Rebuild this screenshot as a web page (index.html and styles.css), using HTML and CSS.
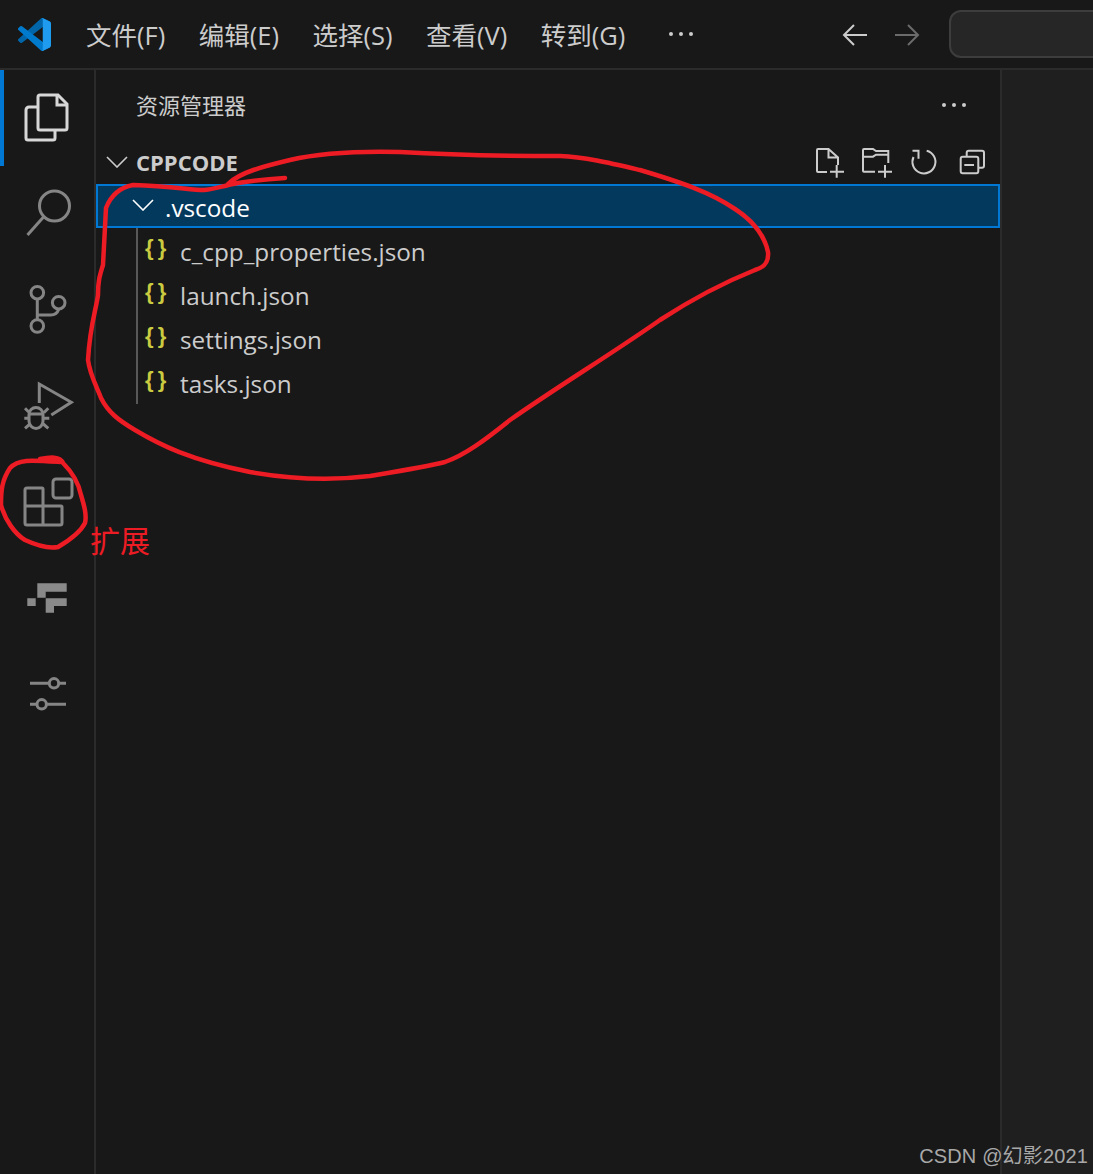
FILE: index.html
```html
<!DOCTYPE html>
<html lang="zh">
<head>
<meta charset="utf-8">
<title>CPPCODE</title>
<link rel="stylesheet" href="styles.css">
</head>
<body>
<div class="app">
  <header class="titlebar">
    <svg class="logo" viewBox="0 0 100 100" width="33" height="33">
      <path fill="#0065A9" d="M96.46 10.8 75.86.87a6.23 6.23 0 0 0-7.1 1.2L1.3 63.6a4.16 4.16 0 0 0 0 6.16l5.5 5a4.16 4.16 0 0 0 5.32.24L93.3 13.4a4.13 4.13 0 0 1 6.7 3.3v-.24a6.25 6.25 0 0 0-3.54-5.65z"/>
      <path fill="#007ACC" d="M96.46 89.2 75.86 99.13a6.23 6.23 0 0 1-7.1-1.2L1.3 36.4a4.16 4.16 0 0 1 0-6.16l5.5-5a4.16 4.16 0 0 1 5.32-.24L93.3 86.6a4.13 4.13 0 0 0 6.7-3.3v.24a6.25 6.25 0 0 1-3.54 5.65z"/>
      <path fill="#1F9CF0" d="M75.86 99.13a6.23 6.23 0 0 1-7.1-1.2c2.3 2.3 6.24.67 6.24-2.6V4.67c0-3.27-3.94-4.9-6.24-2.6a6.23 6.23 0 0 1 7.1-1.2l20.6 9.9A6.25 6.25 0 0 1 100 16.4v67.2a6.25 6.25 0 0 1-3.54 5.63z"/>
    </svg>
    <nav class="menu">
      <span>文件(F)</span><span>编辑(E)</span><span>选择(S)</span><span>查看(V)</span><span>转到(G)</span>
      <svg class="dots" width="26" height="8" viewBox="0 0 26 8"><circle cx="3" cy="4" r="2"/><circle cx="13" cy="4" r="2"/><circle cx="23" cy="4" r="2"/></svg>
    </nav>
    <div class="nav-arrows">
      <svg class="arrow" width="26" height="24" viewBox="0 0 26 24"><path d="M25 12H2M12 2 2 12l10 10"/></svg>
      <svg class="arrow arrow-off" width="26" height="24" viewBox="0 0 26 24"><path d="M1 12h23M14 2l10 10-10 10"/></svg>
    </div>
    <div class="command"></div>
  </header>
  <div class="main">
    <aside class="activity">
      <div class="act act-on">
        <svg class="ico ico-on" width="48" height="48" viewBox="0 0 48 48">
          <path d="M15 13H6a3 3 0 0 0-3 3v28a2 2 0 0 0 2 2h25a2 2 0 0 0 2-2v-8"/>
          <path d="M15 3a2 2 0 0 1 2-2h18l9 9v24a2 2 0 0 1-2 2H17a2 2 0 0 1-2-2z"/>
          <path d="M34 1v10h10"/>
        </svg>
      </div>
      <div class="act">
        <svg class="ico" width="48" height="48" viewBox="0 0 48 48"><circle cx="31.5" cy="16" r="15"/><path d="M20.5 27 4.5 45"/></svg>
      </div>
      <div class="act">
        <svg class="ico" width="48" height="48" viewBox="0 0 48 48"><circle cx="14.3" cy="6.7" r="6.3"/><circle cx="35.7" cy="16.7" r="6.3"/><circle cx="14.3" cy="40" r="6.3"/><path d="M14.3 13v20.5M14.3 29h13.5q6 0 8-6"/></svg>
      </div>
      <div class="act">
        <svg class="ico" width="48" height="48" viewBox="0 0 48 48">
          <path d="M16.300 21V2l32 18.300-20 12.700"/>
          <path d="M6 36v-3.500a7 7 0 0 1 14 0V39a7 7.500 0 0 1-14 0z"/>
          <path d="M6 32h14M2 26.300l4.500 4.500M25.300 26.300l-4.500 4.500M1.300 36.300H6M20 36.300h6.300M2 46.300l5-4.300M25.300 46.300l-5-4.300"/>
        </svg>
      </div>
      <div class="act">
        <svg class="ico" width="50" height="50" viewBox="0 0 50 50"><rect x="30" y="1" width="19" height="19" rx="3"/><path d="M4 10h15a1 1 0 0 1 1 1v36H4a2 2 0 0 1-2-2V12a2 2 0 0 1 2-2zM2 28h36a1 1 0 0 1 1 1v16a2 2 0 0 1-2 2H20"/></svg>
      </div>
      <div class="act">
        <svg class="ico-fill" width="48" height="48" viewBox="0 0 48 48"><path d="M14.300 9.300h29.400v8.400h-21v6h-8.400zM22.700 24.300h21V32H31v6.700h-8.300zM4.300 24.300h8.400V32H4.300z"/></svg>
      </div>
      <div class="act">
        <svg class="ico" width="48" height="48" viewBox="0 0 48 48"><path d="M7 13.300h19M36 13.300h7M7 34.300h7M24 34.300h19"/><circle cx="31" cy="13.300" r="4.700"/><circle cx="18.700" cy="34.300" r="4.700"/></svg>
      </div>
    </aside>
    <section class="sidebar">
      <div class="side-head">
        <span class="side-title">资源管理器</span>
        <svg class="dots" width="26" height="8" viewBox="0 0 26 8"><circle cx="3" cy="4" r="2"/><circle cx="13" cy="4" r="2"/><circle cx="23" cy="4" r="2"/></svg>
      </div>
      <div class="section">
        <svg class="chev chev-section" width="22" height="12" viewBox="0 0 22 12"><path d="M1 1l10 10L21 1"/></svg>
        <span class="section-name">CPPCODE</span>
        <div class="actions">
          <svg class="tool" width="30" height="30" viewBox="0 0 30 30"><path d="M11 26H2a1 1 0 0 1-1-1V4a1 1 0 0 1 1-1h10.500l9.500 8.500V19M12.500 3v8.500H22M14 25.700h14M20.700 19v12.700"/></svg>
          <svg class="tool" width="30" height="30" viewBox="0 0 30 30"><path d="M11 25.700H0a1 1 0 0 1-1-1V4a1 1 0 0 1 1-1h9l3 2h12.300v12M-1 10.700h10l3-2h13.300M14 25.700h14M21 19v12.700"/></svg>
          <svg class="tool" width="30" height="30" viewBox="0 0 30 30"><path d="M14.700 4.700A11.500 11.500 0 1 1 1.500 11M0.500 4.700H6.500v8"/></svg>
          <svg class="tool" width="30" height="30" viewBox="0 0 30 30"><path d="M6.700 10V6.700a2 2 0 0 1 2-2H22a2 2 0 0 1 2 2v13a2 2 0 0 1-2 2h-3.700"/><rect x="0.700" y="10.700" width="17.600" height="16.600" rx="2"/><path d="M4.300 19H14"/></svg>
        </div>
      </div>
      <div class="folder">
        <svg class="chev chev-on" width="22" height="12" viewBox="0 0 22 12"><path d="M1 1l10 10L21 1"/></svg>
        <span>.vscode</span>
      </div>
      <ul class="files">
        <li class="file"><span class="brace">{ }</span><span>c_cpp_properties.json</span></li>
        <li class="file"><span class="brace">{ }</span><span>launch.json</span></li>
        <li class="file"><span class="brace">{ }</span><span>settings.json</span></li>
        <li class="file"><span class="brace">{ }</span><span>tasks.json</span></li>
      </ul>
    </section>
    <div class="editor"></div>
  </div>
  <svg class="ink" width="1093" height="1174" viewBox="0 0 1093 1174">
    <path d="M285 178C268 179 250 181 238 183C222 186 212 190 204 190C190 190 172 186 133 185C122 187 112 193 106 208L103 265C100 275 98 280 98 295C96 310 90 325 88 360C90 375 96 385 101 398C108 412 118 420 135 430C160 445 190 460 250 472C290 479 330 481 370 476C400 471 425 467 445 462C465 455 485 440 510 420C560 385 610 355 660 320C700 294 730 280 755 270C765 267 769 262 768 252C765 238 755 222 735 209C710 192 680 182 640 170C610 163 585 157 560 156C500 156 450 155 400 152C360 151 320 153 290 160C265 166 240 172 228 184"/>
    <path d="M40 459C50 457 60 456 63 463C70 470 78 480 81 495C84 505 87 515 85 523C80 533 70 540 58 547C48 549 38 546 25 540C15 534 5 520 1 505C1 490 2 480 10 468C18 459 30 460 60 462"/>
  </svg>
  <span class="ink-label">扩展</span>
  <span class="mark">CSDN @幻影2021</span>
</div>
</body>
</html>
```
FILE: styles.css
```css
* { box-sizing: border-box; }
html, body { margin: 0; height: 100%; background: #181818; overflow: hidden; }
body { font-family: "Open Sans", "Noto Sans CJK SC", sans-serif; color: #cccccc; }
ul { list-style: none; margin: 0; padding: 0; }
.app { position: relative; width: 1093px; height: 1174px; display: flex; flex-direction: column; overflow: hidden; }

.titlebar { height: 70px; flex: none; display: flex; align-items: center; border-bottom: 2px solid #2b2b2b; padding-left: 18px; }
.logo { flex: none; }
.menu { display: flex; align-items: center; gap: 33.500px; margin-left: 35px; font-size: 25.500px; line-height: 36px; white-space: nowrap; flex: none; margin-top: 1px; }
.menu .dots { margin-left: 9px; margin-top: -2px; }
.dots { fill: #cccccc; flex: none; }
.nav-arrows { position: absolute; left: 842px; top: 23px; display: flex; gap: 26px; }
.arrow { fill: none; stroke: #cccccc; stroke-width: 2; }
.arrow-off { stroke: #6b6b6b; }
.command { position: absolute; left: 949px; top: 10px; width: 300px; height: 48px; background: #262626; border: 2px solid #3d3d3d; border-radius: 12px; }

.main { flex: 1; display: flex; min-height: 0; }
.activity { width: 96px; flex: none; border-right: 2px solid #2b2b2b; display: flex; flex-direction: column; }
.act { height: 96px; flex: none; padding: 24px 0 0 23px; }
.act-on { box-shadow: inset 4px 0 0 #0078d4; }
.ico { display: block; fill: none; stroke: #858585; stroke-width: 3; overflow: visible; }
.ico-on { stroke: #d7d7d7; }
.ico-fill { display: block; fill: #8a8a8a; }

.sidebar { width: 906px; flex: none; border-right: 2px solid #2b2b2b; display: flex; flex-direction: column; }
.side-head { height: 72px; display: flex; align-items: center; justify-content: space-between; padding: 0 33px 2px 40px; }
.side-title { font-size: 22px; line-height: 30px; }
.side-head .dots { margin-top: -1px; }
.section { height: 42px; display: flex; align-items: center; padding: 0 10px 0 10px; }
.chev { fill: none; stroke: #cccccc; stroke-width: 1.600; flex: none; }
.chev-section { margin-top: -3px; }
.section-name { margin-left: 8px; font-size: 22px; font-weight: 700; line-height: 30px; margin-top: -3px; }
.actions { margin-left: auto; display: flex; gap: 18px; margin-top: -4px; }
.tool { fill: none; stroke: #cccccc; stroke-width: 2; display: block; overflow: visible; }
.folder { height: 44px; display: flex; align-items: center; background: #04395e; border: 2px solid #0078d4; padding-left: 34px; color: #ffffff; font-size: 24.300px; }
.folder span { margin: 2px 0 0 11px; }
.chev-on { stroke: #ffffff; margin-top: -2px; }
.files { margin-left: 40px; width: 600px; border-left: 2px solid #585858; }
.file { height: 44px; display: flex; align-items: center; font-size: 24.300px; padding: 2px 0 0 7px; }
.brace { width: 35px; flex: none; color: #cbcb41; font-family: "Liberation Sans", sans-serif; font-size: 22px; line-height: 24px; font-weight: 700; margin-top: -7px; letter-spacing: -1px; }
.editor { flex: 1; background: #1f1f1f; }

.ink { position: absolute; left: 0; top: 0; fill: none; stroke: #ed1c24; stroke-width: 4.500; stroke-linecap: round; stroke-linejoin: round; pointer-events: none; }
.ink-label { position: absolute; left: 90px; top: 519px; color: #ed1c24; font-family: "Noto Sans CJK SC", sans-serif; font-size: 30px; line-height: 40px; }
.mark { position: absolute; right: 5px; top: 1143px; color: #a8a8a8; font-family: "Liberation Sans", "Noto Sans CJK SC", sans-serif; font-size: 20px; letter-spacing: 0.150px; line-height: 26px; white-space: nowrap; }
```
